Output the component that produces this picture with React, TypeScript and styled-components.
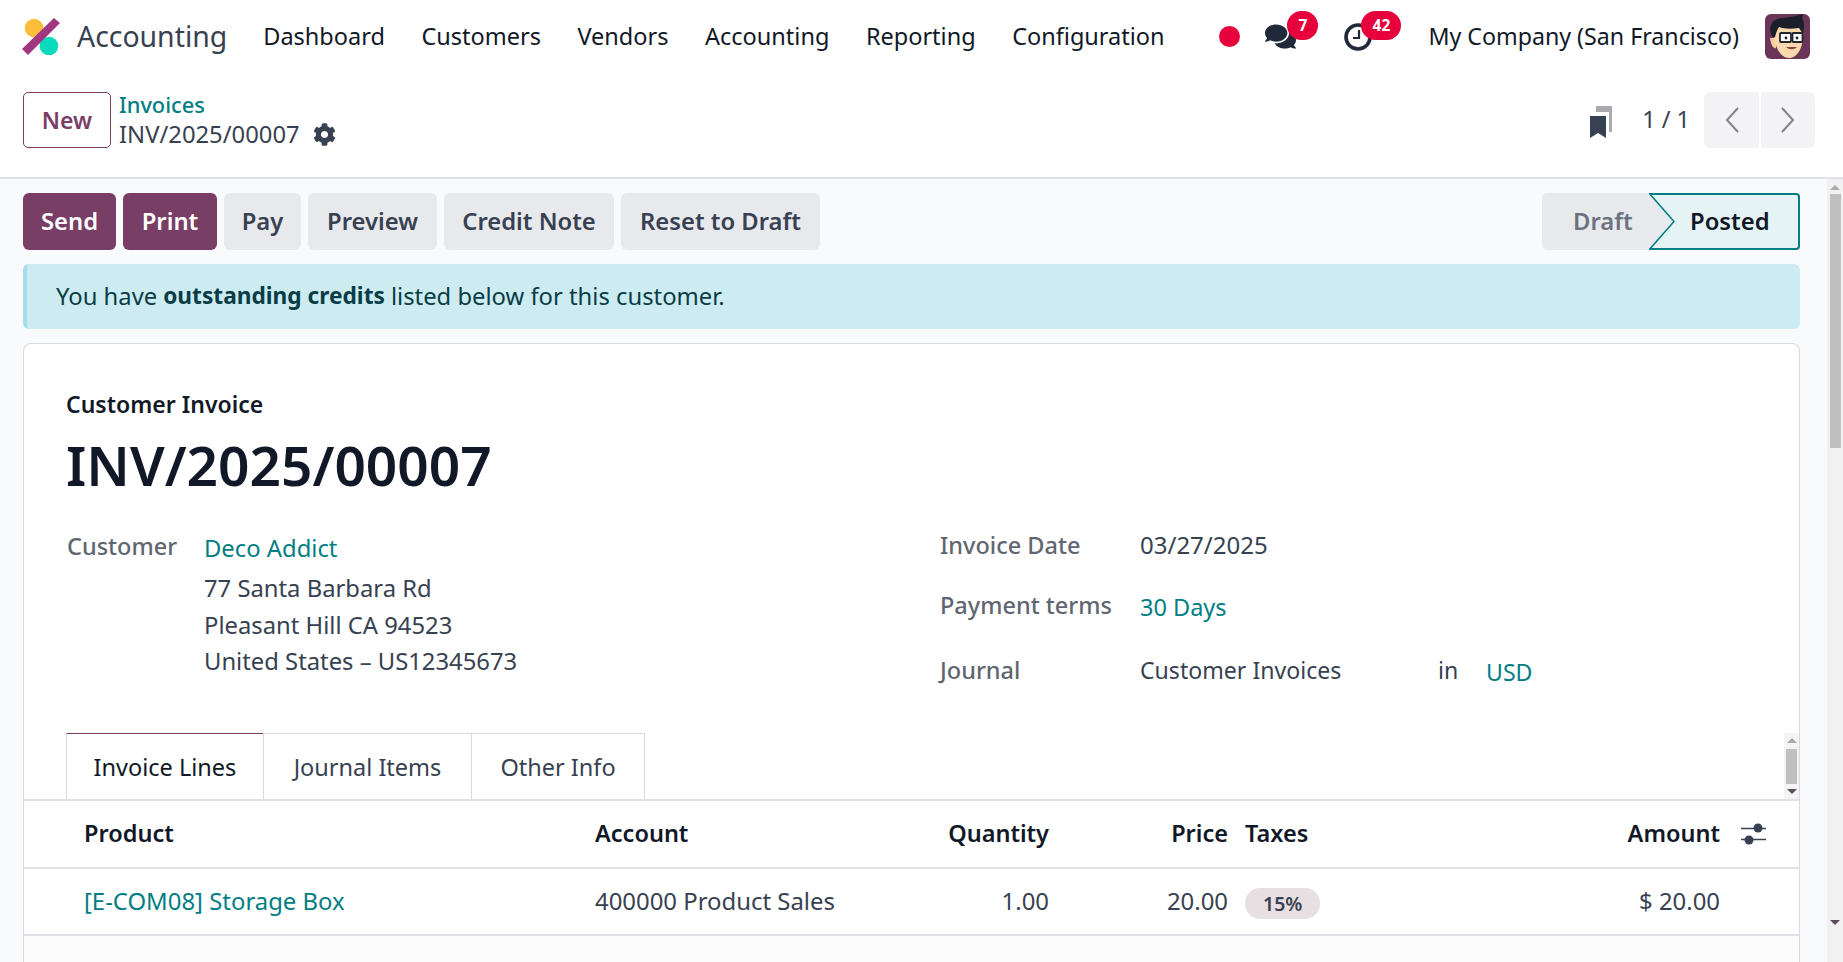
import * as React from 'react';
import styled, { createGlobalStyle } from 'styled-components';
import { FaCog, FaComments } from 'react-icons/fa';

const GlobalStyle = createGlobalStyle`
  html, body {
    margin: 0;
    padding: 0;
    height: 100%;
    overflow: hidden;
    background: #fff;
  }
  body {
    font-family: "Noto Sans", "Open Sans", sans-serif;
    font-size: 23.5px;
    color: #374151;
  }
`;

const Page = styled.div`
  width: 1843px;
  height: 962px;
  display: flex;
  flex-direction: column;
  overflow: hidden;
`;

const Navbar = styled.nav`
  height: 72px;
  flex: none;
  display: flex;
  align-items: center;
  padding: 0 33px 0 22px;
  color: #111827;
`;

const Brand = styled.div`
  font-size: 28.4px;
  color: #374151;
  margin: 0 36px 0 17px;
`;

const MenuItem = styled.a`
  font-size: 23.5px;
  margin-right: 36.5px;
`;

const Systray = styled.div`
  margin-left: auto;
  display: flex;
  align-items: center;
`;

const RecordDot = styled.span`
  width: 21px;
  height: 21px;
  border-radius: 50%;
  background: #e6003c;
  margin-right: 25px;
`;

const TrayIcon = styled.span<{ $gap: number }>`
  position: relative;
  display: flex;
  align-items: center;
  margin-right: ${(p) => p.$gap}px;
`;

const Badge = styled.span<{ $left: number; $wide?: boolean }>`
  position: absolute;
  left: ${(p) => p.$left}px;
  top: -10px;
  width: ${(p) => (p.$wide ? 40 : 31)}px;
  height: 29px;
  border-radius: 15px;
  background: #e6003c;
  color: #fff;
  font-size: 15.5px;
  font-weight: 700;
  display: flex;
  align-items: center;
  justify-content: center;
`;

const Company = styled.span`
  font-size: 23.2px;
  margin-right: 26px;
`;

const ControlPanel = styled.div`
  height: 107px;
  flex: none;
  box-sizing: border-box;
  border-bottom: 2px solid #dfe1e5;
  display: flex;
  padding: 20px 28px 0 23px;
`;

const NewButton = styled.button`
  width: 88px;
  height: 56px;
  flex: none;
  box-sizing: border-box;
  background: #fff;
  border: 1px solid #783e66;
  border-radius: 5px;
  color: #783e66;
  font: 600 23px "Noto Sans", sans-serif;
  padding: 0;
`;

const Breadcrumbs = styled.div`
  margin: -2px 0 0 8px;
  display: flex;
  flex-direction: column;
  line-height: 30px;
`;

const CrumbLink = styled.a`
  color: #017e84;
  font-weight: 500;
  font-size: 21.8px;
`;

const CrumbCurrent = styled.div`
  display: flex;
  align-items: center;
  gap: 13px;
  margin-top: -1px;
  font-size: 23.8px;
  color: #374151;
`;

const PagerArea = styled.div`
  margin-left: auto;
  display: flex;
  align-items: center;
  height: 56px;
`;

const Bookmark = styled.span`
  display: flex;
  margin-top: 3px;
`;

const PagerCount = styled.span`
  margin: 0 14px 2px 30px;
`;

const PagerButton = styled.button<{ $side: 'left' | 'right' }>`
  width: ${(p) => (p.$side === 'left' ? 55 : 54)}px;
  height: 56px;
  border: 0;
  padding: 0;
  background: #f3f3f6;
  margin-left: ${(p) => (p.$side === 'right' ? 2 : 0)}px;
  border-radius: ${(p) => (p.$side === 'left' ? '6px 0 0 6px' : '0 6px 6px 0')};
  display: flex;
  align-items: center;
  justify-content: center;
`;

const Body = styled.div`
  flex: 1;
  min-height: 0;
  display: flex;
  background: #f9fafb;
`;

const Content = styled.main`
  flex: 1;
  min-width: 0;
  padding: 14px 27px 0 23px;
  display: flex;
  flex-direction: column;
`;

const ActionBar = styled.div`
  display: flex;
  justify-content: space-between;
  height: 57px;
`;

const ActionButtons = styled.div`
  display: flex;
  gap: 7px;
`;

const ActionButton = styled.button<{ $primary?: boolean; $width: number }>`
  width: ${(p) => p.$width}px;
  height: 57px;
  border: 0;
  padding: 0 0 2px;
  border-radius: 6px;
  background: ${(p) => (p.$primary ? '#783e66' : '#e7e9ed')};
  color: ${(p) => (p.$primary ? '#fff' : '#374151')};
  font: 600 23.8px "Noto Sans", sans-serif;
`;

const StatusBar = styled.div`
  width: 258px;
  height: 57px;
  display: flex;
  position: relative;
  font-weight: 600;
  font-size: 23.8px;
`;

const StatusDraft = styled.div`
  width: 107px;
  box-sizing: border-box;
  padding: 0 0 2px 31px;
  background: #e7e9ed;
  border-radius: 5px 0 0 5px;
  color: #6b7280;
  display: flex;
  align-items: center;
`;

const StatusPosted = styled.div`
  flex: 1;
  box-sizing: border-box;
  padding: 0 0 2px 41px;
  background: #e6f3f4;
  border: solid #017e84;
  border-width: 2px 2px 2px 0;
  border-radius: 0 4px 4px 0;
  color: #111827;
  display: flex;
  align-items: center;
`;

const StatusArrow = styled.svg`
  position: absolute;
  left: 107px;
  top: 0;
`;

const Alert = styled.div`
  margin-top: 14px;
  height: 65px;
  flex: none;
  box-sizing: border-box;
  padding: 0 0 2px 29px;
  background: #cdecf1;
  border-left: 4px solid #a6dceb;
  border-radius: 6px;
  color: #0a3c47;
  font-size: 23.8px;
  display: flex;
  align-items: center;
  strong {
    font-weight: 700;
    font-size: 22.7px;
    margin: 0 6px;
  }
`;

const Sheet = styled.section`
  margin-top: 14px;
  flex: 1;
  box-sizing: border-box;
  background: #fff;
  border: solid #d8dadd;
  border-width: 1px 1px 0 1px;
  border-radius: 8px 8px 0 0;
  display: flex;
  flex-direction: column;
`;

const SheetHead = styled.div`
  padding: 44px 42px 0 42px;
`;

const SheetKind = styled.div`
  font-weight: 600;
  font-size: 23px;
  color: #111827;
  line-height: 32px;
`;

const SheetTitle = styled.h1`
  margin: 9px 0 0;
  font-size: 55px;
  line-height: 72px;
  font-weight: 600;
  color: #111827;
`;

const FormColumns = styled.div`
  margin-top: 27px;
  display: grid;
  grid-template-columns: 874px 1fr;
  height: 205px;
`;

const RightColumn = styled.div`
  margin: -1px 0 0 -1px;
`;

const FieldRow = styled.div<{ $height: number; $labelWidth: number }>`
  display: grid;
  grid-template-columns: ${(p) => p.$labelWidth}px 1fr;
  min-height: ${(p) => p.$height}px;
  line-height: 36px;
`;

const Label = styled.div`
  font-weight: 500;
  color: #5f6672;
  margin-left: 1px;
`;

const Address = styled.div`
  font-size: 23.8px;
  line-height: 36.5px;
`;

const CustomerLink = styled.a`
  display: block;
  color: #017e84;
  margin: 2px 0 3.5px;
`;

const DateValue = styled.div`
  font-size: 24px;
`;

const Link = styled.a`
  color: #017e84;
`;

const RaisedLink = styled(Link)`
  padding-top: 2px;
`;

const JournalValue = styled.div`
  display: grid;
  grid-template-columns: 298px 48px 1fr;
  font-size: 23.1px;
`;

const TabStrip = styled.div`
  display: flex;
  height: 66px;
  padding-left: 42px;
  position: relative;
  flex: none;
  border-bottom: 2px solid #dfe1e5;
`;

const Tab = styled.div<{ $width: number; $active?: boolean }>`
  width: ${(p) => p.$width}px;
  box-sizing: border-box;
  border: 1px solid #d8dadd;
  border-bottom: 0;
  margin-right: -1px;
  background: #fff;
  display: flex;
  align-items: center;
  justify-content: center;
  color: ${(p) => (p.$active ? '#111827' : '#374151')};
  ${(p) => p.$active && 'border-top: 1px solid #783e66;'}
`;

const TabScroll = styled.div`
  position: absolute;
  right: 0;
  top: 0;
  bottom: 0;
  width: 15px;
  background: #f4f4f4;
  display: flex;
  flex-direction: column;
  align-items: center;
  justify-content: space-between;
  padding: 5px 0;
  box-sizing: border-box;
`;

const TabThumb = styled.div`
  width: 11px;
  height: 35px;
  background: #bfbfbf;
`;

const Arrow = styled.span<{ $dir: 'up' | 'down'; $color: string }>`
  width: 0;
  height: 0;
  border-left: 5px solid transparent;
  border-right: 5px solid transparent;
  ${(p) => (p.$dir === 'up' ? 'border-bottom' : 'border-top')}: 5px solid ${(p) => p.$color};
`;

const GridRow = styled.div<{ $height: number }>`
  height: ${(p) => p.$height}px;
  flex: none;
  box-sizing: border-box;
  display: grid;
  grid-template-columns: 511px 250px 204px 179px 317px 175px 1fr;
  padding-left: 60px;
  align-items: center;
  border-bottom: 2px solid #dfe1e5;
  font-size: 23.9px;
`;

const HeadRow = styled(GridRow)`
  font-weight: 600;
  font-size: 23.5px;
  color: #111827;
`;

const Cell = styled.div<{ $right?: boolean; $pad?: boolean }>`
  text-align: ${(p) => (p.$right ? 'right' : 'left')};
  padding: 0 0 2px ${(p) => (p.$pad ? 17 : 0)}px;
  white-space: nowrap;
`;

const TaxPill = styled.span`
  display: inline-block;
  background: #e8dfe3;
  border-radius: 15px;
  padding: 0 18px;
  margin-top: 5px;
  line-height: 31px;
  font-size: 19.5px;
  font-weight: 600;
`;

const AdjustCell = styled.div`
  padding-left: 21px;
  display: flex;
`;

const SheetRest = styled.div`
  flex: 1;
  background: #fbfbfb;
`;

const PageScroll = styled.aside`
  width: 16px;
  flex: none;
  background: #f1f1f1;
  display: flex;
  flex-direction: column;
  align-items: center;
  box-sizing: border-box;
  padding: 6px 0 5px;
`;

const PageThumb = styled.div`
  width: 11px;
  height: 254px;
  margin-top: 4px;
  background: #bfbfbf;
`;

const PageScrollEnd = styled.div`
  margin-top: auto;
`;

const Logo = () => (
  <svg width="38" height="37" viewBox="0 0 38 37">
    <circle cx="12" cy="10" r="9.3" fill="#fdbd3c" />
    <circle cx="27" cy="28" r="9.3" fill="#06dbbd" />
    <path d="M0 31 L32 0 L38 5 L6 37 Z" fill="#a23781" />
  </svg>
);

const ClockIcon = () => (
  <svg width="31" height="31" viewBox="0 0 31 31">
    <circle cx="15" cy="16" r="12" fill="none" stroke="#1f2937" strokeWidth="3.6" />
    <path d="M16 9 V17 H10" fill="none" stroke="#1f2937" strokeWidth="2.2" />
  </svg>
);

const BookmarkIcon = () => (
  <svg width="22" height="32" viewBox="0 0 22 32">
    <path d="M6 0 H22 V26 H19 V6 H6 Z" fill="#a9abb1" />
    <path d="M0 10 H16 V32 L8 27 L0 32 Z" fill="#374151" />
  </svg>
);

const Chevron = ({ dir }: { dir: 'left' | 'right' }) => (
  <svg width="14" height="26" viewBox="0 0 14 26">
    <path
      d={dir === 'left' ? 'M13 1 L2 13 L13 25' : 'M1 1 L12 13 L1 25'}
      fill="none"
      stroke="#808389"
      strokeWidth="2"
    />
  </svg>
);

const AdjustIcon = () => (
  <svg width="25" height="22" viewBox="0 0 25 22">
    <path d="M0 5.5 H25 M0 16.5 H25" stroke="#374151" strokeWidth="1.6" />
    <circle cx="17" cy="5" r="4.5" fill="#374151" />
    <circle cx="8" cy="17" r="4.5" fill="#374151" />
  </svg>
);

const Avatar = () => (
  <svg width="45" height="45" viewBox="0 0 45 45">
    <rect width="45" height="45" rx="6" fill="#6b3558" />
    <path d="M5 24 C6 32 9 35 11 34 L11 24 Z" fill="#f5cf9f" />
    <path d="M9 18 C9 32 15 44 24 44 C33 44 39 32 38 17 L36 10 L11 12 Z" fill="#f7d9ac" />
    <path d="M6 20 C3 10 9 4 18 4 C26 3 31 2 38 0 L37 4 C40 9 39 14 38 20 L34 14 C26 15 19 15 14 13 C12 16 11 19 10 23 L8 23 Z" fill="#1b1f2c" />
    <rect x="15" y="19" width="11" height="9" rx="1" fill="#fff" stroke="#22252e" strokeWidth="1.8" />
    <rect x="27.5" y="19" width="10" height="9" rx="1" fill="#fff" stroke="#22252e" strokeWidth="1.8" />
    <circle cx="21" cy="24" r="1.4" fill="#22252e" />
    <circle cx="32" cy="24" r="1.4" fill="#22252e" />
    <path d="M21 33 C24 36 29 36 32 33 Z" fill="#8c3f3a" />
  </svg>
);

const menu = ['Dashboard', 'Customers', 'Vendors', 'Accounting', 'Reporting', 'Configuration'];

const actions = [
  { label: 'Send', width: 93, primary: true },
  { label: 'Print', width: 94, primary: true },
  { label: 'Pay', width: 77 },
  { label: 'Preview', width: 129 },
  { label: 'Credit Note', width: 170 },
  { label: 'Reset to Draft', width: 199 },
];

export default function App() {
  return (
    <Page>
      <GlobalStyle />
      <Navbar>
        <Logo />
        <Brand>Accounting</Brand>
        {menu.map((item) => (
          <MenuItem key={item}>{item}</MenuItem>
        ))}
        <Systray>
          <RecordDot />
          <TrayIcon $gap={47}>
            <FaComments size={31} color="#1f2937" />
            <Badge $left={22}>7</Badge>
          </TrayIcon>
          <TrayIcon $gap={54}>
            <ClockIcon />
            <Badge $left={18} $wide>42</Badge>
          </TrayIcon>
          <Company>My Company (San Francisco)</Company>
          <Avatar />
        </Systray>
      </Navbar>

      <ControlPanel>
        <NewButton>New</NewButton>
        <Breadcrumbs>
          <CrumbLink>Invoices</CrumbLink>
          <CrumbCurrent>
            INV/2025/00007
            <FaCog size={23} color="#374151" />
          </CrumbCurrent>
        </Breadcrumbs>
        <PagerArea>
          <Bookmark><BookmarkIcon /></Bookmark>
          <PagerCount>1 / 1</PagerCount>
          <PagerButton $side="left"><Chevron dir="left" /></PagerButton>
          <PagerButton $side="right"><Chevron dir="right" /></PagerButton>
        </PagerArea>
      </ControlPanel>

      <Body>
        <Content>
          <ActionBar>
            <ActionButtons>
              {actions.map((a) => (
                <ActionButton key={a.label} $primary={a.primary} $width={a.width}>{a.label}</ActionButton>
              ))}
            </ActionButtons>
            <StatusBar>
              <StatusDraft>Draft</StatusDraft>
              <StatusPosted>Posted</StatusPosted>
              <StatusArrow width="27" height="57" viewBox="0 0 27 57">
                <path d="M0 0 L25 28.5 L0 57 Z" fill="#e7e9ed" />
                <path d="M0 0 L25 28.5 L0 57" fill="none" stroke="#017e84" strokeWidth="1.5" />
              </StatusArrow>
            </StatusBar>
          </ActionBar>

          <Alert>
            You have <strong>outstanding credits</strong> listed below for this customer.
          </Alert>

          <Sheet>
            <SheetHead>
              <SheetKind>Customer Invoice</SheetKind>
              <SheetTitle>INV/2025/00007</SheetTitle>
              <FormColumns>
                <div>
                  <FieldRow $height={36} $labelWidth={138}>
                    <Label>Customer</Label>
                    <Address>
                      <CustomerLink>Deco Addict</CustomerLink>
                      <div>77 Santa Barbara Rd</div>
                      <div>Pleasant Hill CA 94523</div>
                      <div>United States – US12345673</div>
                    </Address>
                  </FieldRow>
                </div>
                <RightColumn>
                  <FieldRow $height={60} $labelWidth={201}>
                    <Label>Invoice Date</Label>
                    <DateValue>03/27/2025</DateValue>
                  </FieldRow>
                  <FieldRow $height={65} $labelWidth={201}>
                    <Label>Payment terms</Label>
                    <RaisedLink>30 Days</RaisedLink>
                  </FieldRow>
                  <FieldRow $height={36} $labelWidth={201}>
                    <Label>Journal</Label>
                    <JournalValue>
                      <span>Customer Invoices</span>
                      <span>in</span>
                      <RaisedLink>USD</RaisedLink>
                    </JournalValue>
                  </FieldRow>
                </RightColumn>
              </FormColumns>
            </SheetHead>

            <TabStrip>
              <Tab $width={198} $active>Invoice Lines</Tab>
              <Tab $width={209}>Journal Items</Tab>
              <Tab $width={174}>Other Info</Tab>
              <TabScroll>
                <Arrow $dir="up" $color="#a9a9a9" />
                <TabThumb />
                <Arrow $dir="down" $color="#5b4a5a" />
              </TabScroll>
            </TabStrip>

            <HeadRow $height={68}>
              <Cell>Product</Cell>
              <Cell>Account</Cell>
              <Cell $right>Quantity</Cell>
              <Cell $right>Price</Cell>
              <Cell $pad>Taxes</Cell>
              <Cell $right>Amount</Cell>
              <AdjustCell><AdjustIcon /></AdjustCell>
            </HeadRow>

            <GridRow $height={67}>
              <Cell><Link>[E-COM08] Storage Box</Link></Cell>
              <Cell>400000 Product Sales</Cell>
              <Cell $right>1.00</Cell>
              <Cell $right>20.00</Cell>
              <Cell $pad><TaxPill>15%</TaxPill></Cell>
              <Cell $right>$ 20.00</Cell>
              <div />
            </GridRow>
            <SheetRest />
          </Sheet>
        </Content>

        <PageScroll>
          <Arrow $dir="up" $color="#a9a9a9" />
          <PageThumb />
          <PageScrollEnd><Arrow $dir="down" $color="#5b4a5a" /></PageScrollEnd>
        </PageScroll>
      </Body>
    </Page>
  );
}
